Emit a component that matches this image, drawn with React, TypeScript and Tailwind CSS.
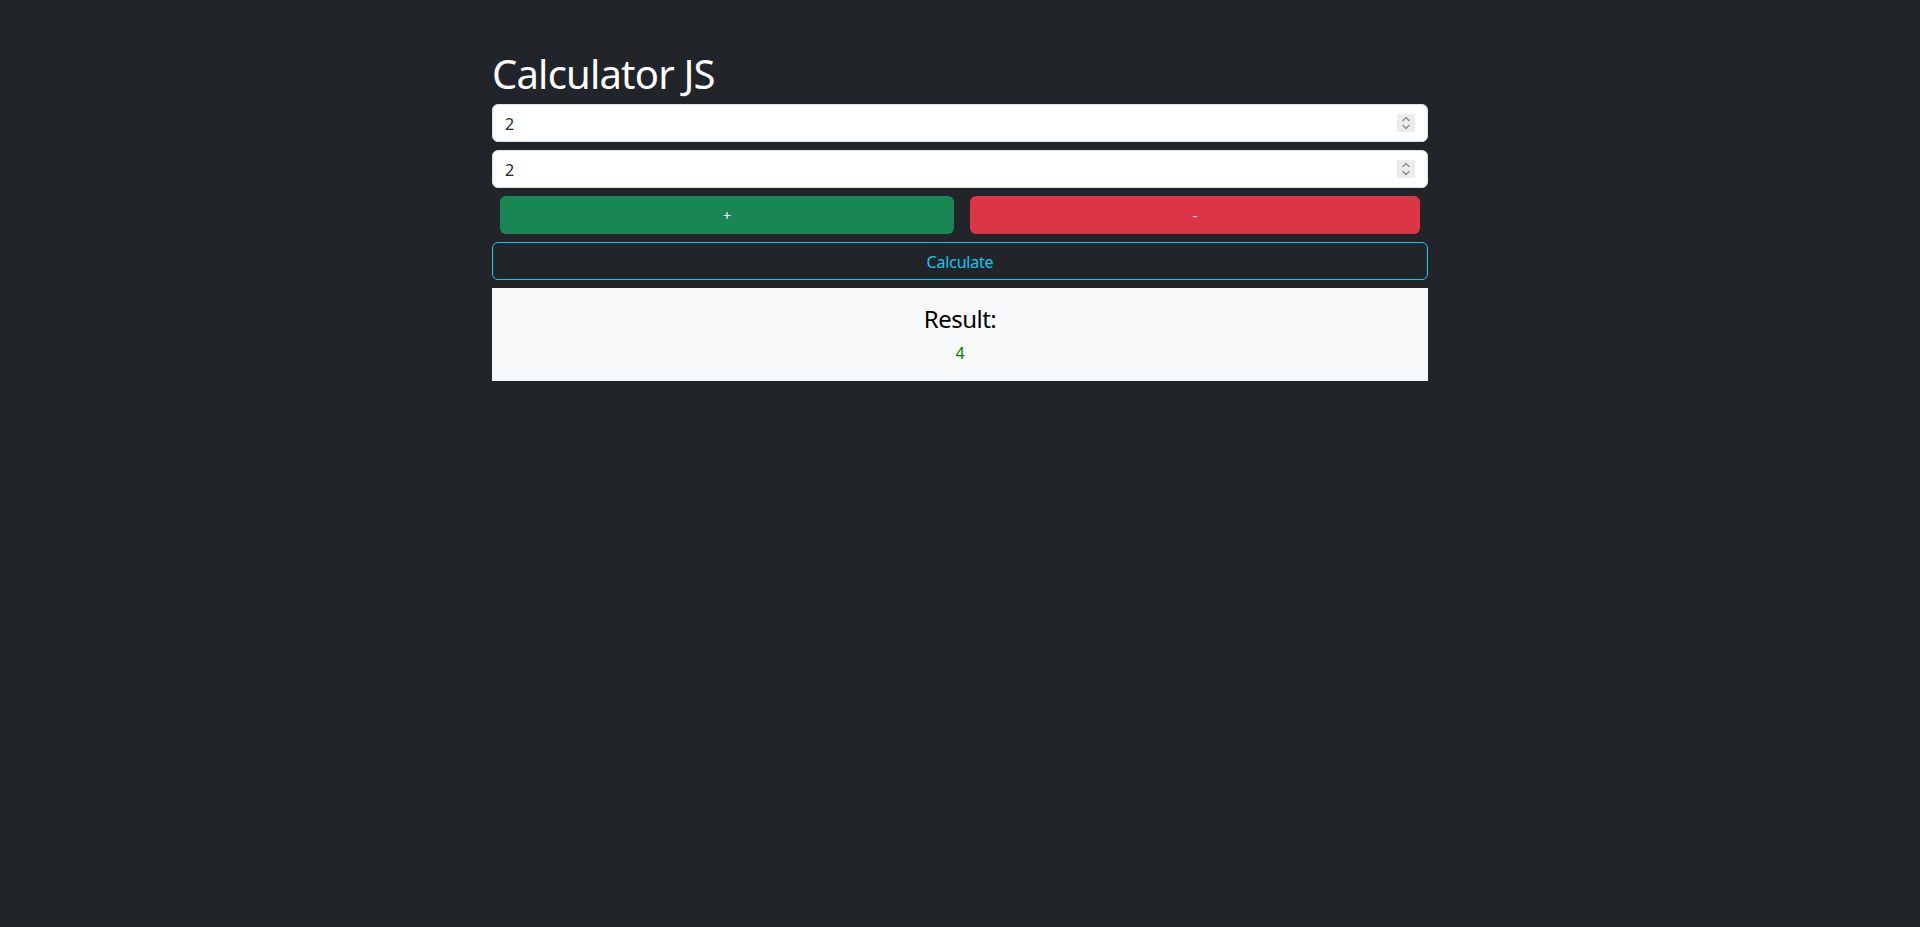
import { useState } from "react"

const font = { fontFamily: '"Noto Sans", "Open Sans", sans-serif' }

function NumberField({ value, onChange }: { value: string; onChange: (v: string) => void }) {
  return (
    <div className="flex h-[38px] items-center rounded-md border border-[#dee2e6] bg-white pl-3 pr-3">
      <input
        type="text"
        value={value}
        onChange={(e) => onChange(e.target.value)}
        className="flex-1 bg-transparent pt-[2px] text-base text-[#212529] outline-none"
      />
      {/* fake spinner */}
      <div className="flex h-[18px] w-[18px] items-center justify-center bg-[#ececef]">
        <svg width="12" height="16" viewBox="0 0 12 16" fill="none" stroke="#8a8a8f" strokeWidth="1.3">
          <path d="M2.5 6 L6 2.5 L9.5 6" />
          <path d="M2.5 10 L6 13.5 L9.5 10" />
        </svg>
      </div>
    </div>
  )
}

export default function App() {
  const [a, setA] = useState("2")
  const [b, setB] = useState("2")
  const [op, setOp] = useState<"+" | "-">("+")
  const [result, setResult] = useState<number>(4)

  const calculate = () => {
    const x = parseFloat(a) || 0
    const y = parseFloat(b) || 0
    setResult(op === "+" ? x + y : x - y)
  }

  return (
    <div className="min-h-[927px] bg-[#212529]" style={font}>
      <div className="mx-auto w-[936px] pt-[50px]">
        <h1 className="mb-[6px] text-[40px] leading-[48px] font-normal tracking-[-0.8px] text-white">Calculator JS</h1>

        <div className="flex flex-col gap-2">
          <NumberField value={a} onChange={setA} />
          <NumberField value={b} onChange={setB} />

          <div className="flex justify-between px-2">
            <button
              onClick={() => setOp("+")}
              className="h-[38px] w-[454px] rounded-md bg-[#198754] pt-[2px] text-sm text-white"
            >
              +
            </button>
            <button
              onClick={() => setOp("-")}
              className="h-[38px] w-[450px] rounded-md bg-[#dc3545] pt-[2px] text-sm text-white"
            >
              -
            </button>
          </div>

          <button
            onClick={calculate}
            className="h-[38px] rounded-md border border-[#0dcaf0] pt-[2px] text-base tracking-[-0.2px] text-[#0dcaf0]"
          >
            Calculate
          </button>

          <div className="flex flex-col items-center bg-[#f8f9fa] py-4">
            <h4 className="mb-2 text-2xl leading-[29px] tracking-[-0.5px] text-black">Result:</h4>
            <p className="text-base leading-6 text-[#008000]">{result}</p>
          </div>
        </div>
      </div>
    </div>
  )
}
